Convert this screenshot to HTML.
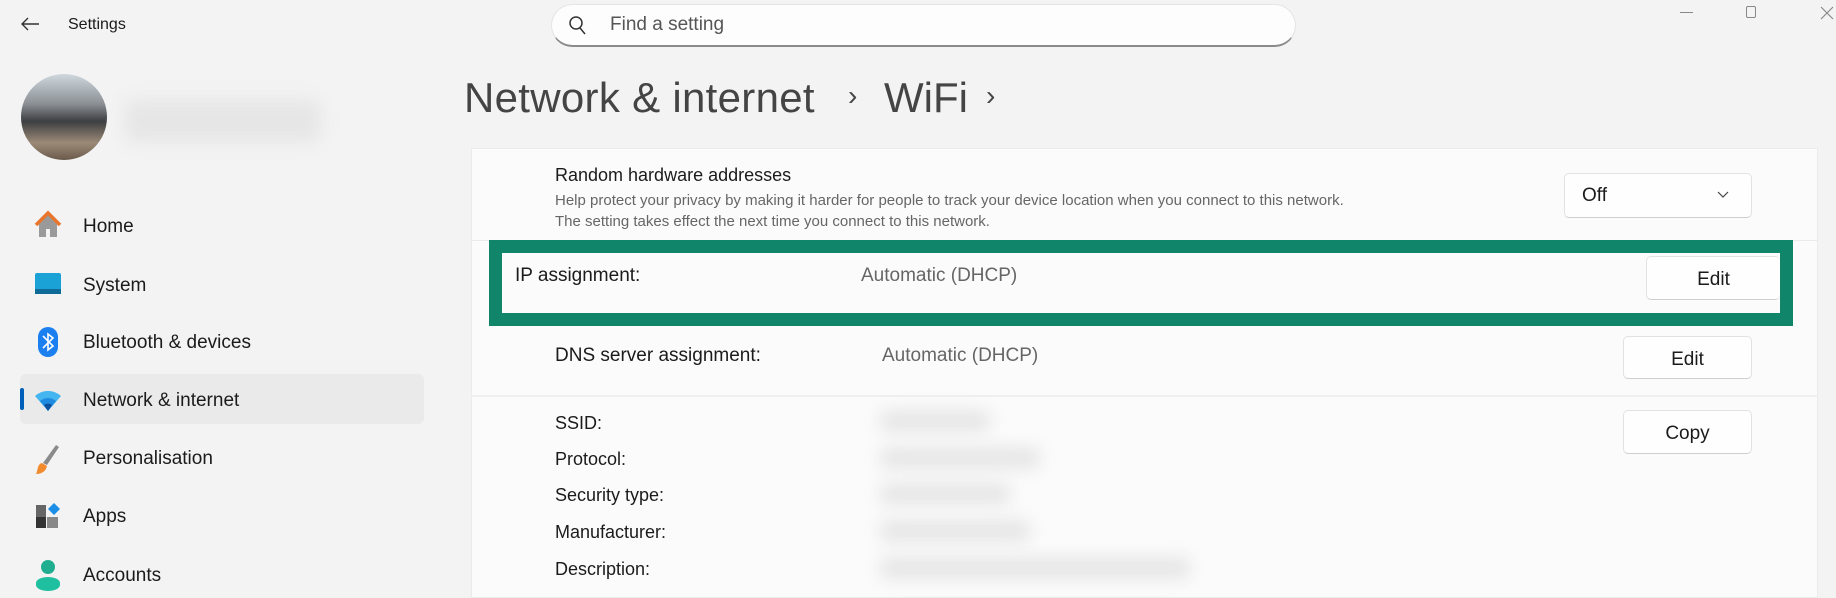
<!DOCTYPE html>
<html><head><meta charset="utf-8"><style>
*{margin:0;padding:0;box-sizing:border-box}
body{width:1836px;height:592px;overflow:hidden;background:#f3f3f3;font-family:"Liberation Sans",sans-serif;color:#1b1b1b;position:relative}
.a{position:absolute;white-space:nowrap}
.nav{position:absolute;left:83px;font-size:19px;line-height:24px}
.ic{position:absolute;left:34px}
.card{position:absolute;left:471px;top:148px;width:1347px;height:450px;background:#fbfbfb;border:1px solid #ebebeb}
.btn{position:absolute;background:#fefefe;border:1px solid #e2e2e2;border-bottom-color:#cfcfcf;border-radius:5px;font-size:19px;text-align:center}
.lbl{position:absolute;left:555px;font-size:18px;line-height:22px}
.blur{position:absolute;background:#e6e6e6;filter:blur(8px);border-radius:8px}
</style></head><body>
<svg class="a" style="left:20px;top:16px" width="20" height="16" viewBox="0 0 20 16"><path d="M19 8H2M8 2L2 8l6 6" fill="none" stroke="#333" stroke-width="1.4"/></svg>
<div class="a" style="left:68px;top:16px;font-size:16px">Settings</div>
<div class="a" style="left:551px;top:4px;width:745px;height:43px;background:#fdfdfd;border:1px solid #e4e4e4;border-bottom:2px solid #8a8a8a;border-radius:22px"></div>
<svg class="a" style="left:568px;top:15px" width="18" height="20" viewBox="0 0 18 20"><circle cx="8" cy="8" r="6" fill="none" stroke="#333" stroke-width="1.5"/><path d="M12 13l5 6" stroke="#333" stroke-width="1.5"/></svg>
<div class="a" style="left:610px;top:14px;font-size:19px;color:#555">Find a setting</div>
<div class="a" style="left:1680px;top:12px;width:13px;height:1px;background:#888"></div>
<div class="a" style="left:1746px;top:6px;width:10px;height:12px;border:1px solid #888;border-radius:2px"></div>
<svg class="a" style="left:1820px;top:6px" width="16" height="14"><path d="M1 1l12 12M13 1L1 13" stroke="#888" stroke-width="1.2"/></svg>
<div class="a" style="left:21px;top:74px;width:86px;height:86px;border-radius:50%;background:linear-gradient(180deg,#cfd8de 0%,#8a8f93 35%,#3d3f42 55%,#9c8a78 80%,#6b5a4a 100%)"></div>
<div class="blur" style="left:125px;top:100px;width:195px;height:42px"></div>
<div class="a" style="left:20px;top:374px;width:404px;height:50px;background:#eaeaea;border-radius:6px"></div>
<div class="a" style="left:20px;top:388px;width:4px;height:22px;background:#005fb8;border-radius:2px"></div>
<svg class="ic" style="top:210px" width="28" height="28" viewBox="0 0 28 28"><path d="M5 13v14h7v-8h4v8h7V13L14 4z" fill="#9a9a9a"/><path d="M2 15L14 3l12 12" fill="none" stroke="#e8762d" stroke-width="3.5"/></svg>
<svg class="ic" style="top:272px" width="28" height="24"><rect x="1" y="1" width="26" height="21" rx="2" fill="#1aa2d6"/><rect x="1" y="17" width="26" height="5" fill="#0e6b98"/></svg>
<svg class="ic" style="top:326px" width="28" height="32" viewBox="0 0 28 32"><rect x="4" y="1" width="20" height="30" rx="10" fill="#1b7ff0"/><path d="M9 10l10 10-5 4V8l5 4-10 10" fill="none" stroke="#fff" stroke-width="1.6"/></svg>
<svg class="ic" style="top:388px" width="28" height="24" viewBox="0 0 28 24"><path d="M1 8a19 19 0 0 1 26 0L14 23z" fill="#45b5f0"/><path d="M6 13a12 12 0 0 1 16 0L14 23z" fill="#1f8be0"/><path d="M10 17a6 6 0 0 1 8 0L14 23z" fill="#0f4fa0"/></svg>
<svg class="ic" style="top:443px" width="28" height="32" viewBox="0 0 28 32"><path d="M22 2l3 2-12 18-4-2z" fill="#8a8a8a"/><path d="M8 20l5 3c-1 5-5 8-11 8 2-3 1-10 6-11z" fill="#f28a2e"/></svg>
<svg class="ic" style="top:502px" width="28" height="28"><rect x="2" y="3" width="10" height="12" fill="#666"/><rect x="2" y="15" width="10" height="11" fill="#333"/><rect x="13" y="15" width="11" height="11" fill="#888"/><path d="M20 1l6 6-6 6-6-6z" fill="#1b8ee8"/></svg>
<svg class="ic" style="top:559px" width="28" height="33"><circle cx="14" cy="8" r="7" fill="#1fae8f"/><path d="M2 24a12 6 0 0 1 24 0v2a12 6 0 0 1-24 0z" fill="#1fc0a0"/></svg>
<div class="nav" style="top:215px">Home</div>
<div class="nav" style="top:274px">System</div>
<div class="nav" style="top:331px">Bluetooth &amp; devices</div>
<div class="nav" style="top:389px">Network &amp; internet</div>
<div class="nav" style="top:447px">Personalisation</div>
<div class="nav" style="top:505px">Apps</div>
<div class="nav" style="top:564px">Accounts</div>
<div class="a" style="left:464px;top:74px;font-size:42px;color:#444;letter-spacing:0.3px">Network &amp; internet</div>
<div class="a" style="left:848px;top:80px;font-size:28px;color:#444">›</div>
<div class="a" style="left:884px;top:74px;font-size:42px;color:#444">WiFi</div>
<div class="a" style="left:986px;top:80px;font-size:28px;color:#444">›</div>
<div class="card"></div>
<div class="a" style="left:471px;top:240px;width:1347px;height:1px;background:#ebebeb"></div>
<div class="a" style="left:471px;top:395px;width:1347px;height:2px;background:#efefef"></div>
<div class="lbl" style="top:164px">Random hardware addresses</div>
<div class="a" style="left:555px;top:192px;font-size:15px;color:#666">Help protect your privacy by making it harder for people to track your device location when you connect to this network.</div>
<div class="a" style="left:555px;top:213px;font-size:15px;color:#666">The setting takes effect the next time you connect to this network.</div>
<div class="btn" style="left:1564px;top:173px;width:188px;height:45px;text-align:left;padding:11px 0 0 17px">Off</div>
<svg class="a" style="left:1717px;top:191px" width="12" height="8"><path d="M1 1l5 5 5-5" fill="none" stroke="#444" stroke-width="1.2"/></svg>
<div class="a" style="left:489px;top:240px;width:1304px;height:86px;border:13px solid #10856a;background:#fbfbfb"></div>
<div class="a" style="left:515px;top:265px;font-size:19px">IP assignment:</div>
<div class="a" style="left:861px;top:265px;font-size:19px;color:#666">Automatic (DHCP)</div>
<div class="btn" style="left:1646px;top:256px;width:134px;height:44px;padding-top:12px;border-right:none">Edit</div>
<div class="lbl" style="top:345px;font-size:19px">DNS server assignment:</div>
<div class="a" style="left:882px;top:345px;font-size:19px;color:#666">Automatic (DHCP)</div>
<div class="btn" style="left:1623px;top:336px;width:129px;height:43px;padding-top:12px">Edit</div>
<div class="btn" style="left:1623px;top:410px;width:129px;height:44px;padding-top:12px">Copy</div>
<div class="lbl" style="top:412px">SSID:</div>
<div class="lbl" style="top:448px">Protocol:</div>
<div class="lbl" style="top:484px">Security type:</div>
<div class="lbl" style="top:521px">Manufacturer:</div>
<div class="lbl" style="top:558px">Description:</div>
<div class="blur" style="left:880px;top:410px;width:110px;height:22px"></div>
<div class="blur" style="left:880px;top:447px;width:160px;height:22px"></div>
<div class="blur" style="left:880px;top:483px;width:130px;height:22px"></div>
<div class="blur" style="left:880px;top:520px;width:150px;height:22px"></div>
<div class="blur" style="left:880px;top:557px;width:310px;height:22px"></div>
</body></html>
